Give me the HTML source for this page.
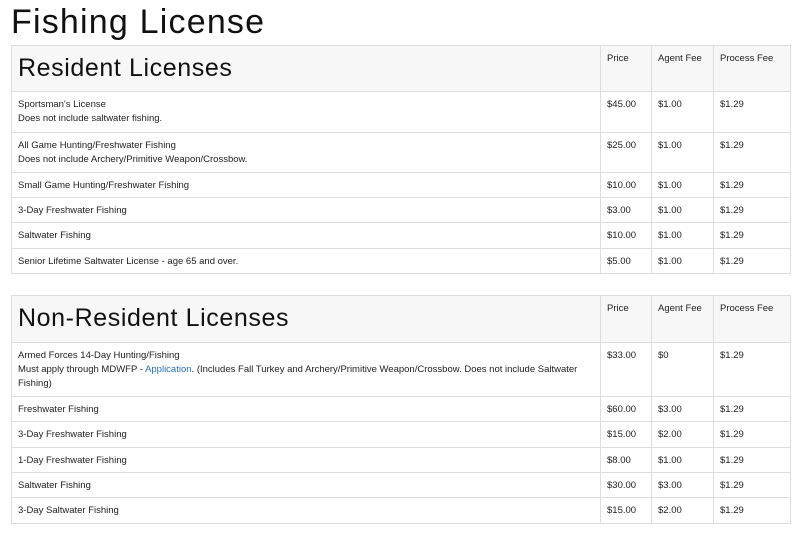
<!DOCTYPE html><html><head><style>
body{margin:0;background:#fff;font-family:"Liberation Sans",Arial,sans-serif;color:#222;width:800px;height:534px;overflow:hidden;position:relative}
h1{position:absolute;left:11px;top:2px;margin:0;font-size:34px;font-weight:normal;color:#111;letter-spacing:1.2px;line-height:40px}
table{position:absolute;left:11px;width:779px;border-collapse:collapse;font-size:9.5px;table-layout:fixed}
td,th{border:1px solid #ddd;vertical-align:top;padding:6px 6px 4px;text-align:left;font-weight:normal;line-height:14px}
th{background:#f7f7f7}
th.h{font-size:25px;letter-spacing:0.6px;color:#111;padding:8px 6px 0;line-height:28px}
a{color:#2a6fb0;text-decoration:none}
</style></head><body>
<h1>Fishing License</h1>
<table style="top:45px">
<colgroup><col style="width:589px"><col style="width:51px"><col style="width:62px"><col style="width:77px"></colgroup>
<tr style="height:46px"><th class="h">Resident Licenses</th><th>Price</th><th>Agent Fee</th><th>Process Fee</th></tr>
<tr style="height:41px"><td>Sportsman's License<br>Does not include saltwater fishing.</td><td>$45.00</td><td>$1.00</td><td>$1.29</td></tr>
<tr style="height:40px"><td>All Game Hunting/Freshwater Fishing<br>Does not include Archery/Primitive Weapon/Crossbow.</td><td>$25.00</td><td>$1.00</td><td>$1.29</td></tr>
<tr style="height:25px"><td>Small Game Hunting/Freshwater Fishing</td><td>$10.00</td><td>$1.00</td><td>$1.29</td></tr>
<tr style="height:25px"><td>3-Day Freshwater Fishing</td><td>$3.00</td><td>$1.00</td><td>$1.29</td></tr>
<tr style="height:26px"><td>Saltwater Fishing</td><td>$10.00</td><td>$1.00</td><td>$1.29</td></tr>
<tr style="height:25px"><td>Senior Lifetime Saltwater License - age 65 and over.</td><td>$5.00</td><td>$1.00</td><td>$1.29</td></tr>
</table>
<table style="top:295px">
<colgroup><col style="width:589px"><col style="width:51px"><col style="width:62px"><col style="width:77px"></colgroup>
<tr style="height:47px"><th class="h">Non-Resident Licenses</th><th>Price</th><th>Agent Fee</th><th>Process Fee</th></tr>
<tr style="height:54px"><td>Armed Forces 14-Day Hunting/Fishing<br>Must apply through MDWFP - <a>Application</a>. (Includes Fall Turkey and Archery/Primitive Weapon/Crossbow. Does not include Saltwater Fishing)</td><td>$33.00</td><td>$0</td><td>$1.29</td></tr>
<tr style="height:25px"><td>Freshwater Fishing</td><td>$60.00</td><td>$3.00</td><td>$1.29</td></tr>
<tr style="height:26px"><td>3-Day Freshwater Fishing</td><td>$15.00</td><td>$2.00</td><td>$1.29</td></tr>
<tr style="height:25px"><td>1-Day Freshwater Fishing</td><td>$8.00</td><td>$1.00</td><td>$1.29</td></tr>
<tr style="height:25px"><td>Saltwater Fishing</td><td>$30.00</td><td>$3.00</td><td>$1.29</td></tr>
<tr style="height:26px"><td>3-Day Saltwater Fishing</td><td>$15.00</td><td>$2.00</td><td>$1.29</td></tr>
</table>
</body></html>
